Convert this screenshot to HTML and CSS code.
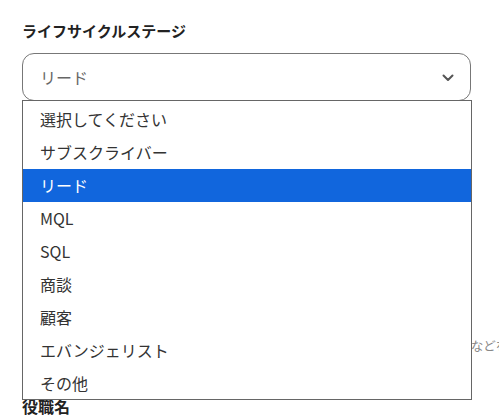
FILE: index.html
```html
<!DOCTYPE html>
<html lang="ja">
<head>
<meta charset="utf-8">
<link rel="stylesheet" href="styles.css">
</head>
<body>
<div class="form">
  <div class="field">
    <div class="label">ライフサイクルステージ</div>
    <div class="select-wrap">
      <div class="select">
        <span class="value">リード</span>
        <svg class="chev" width="12" height="8" viewBox="0 0 12 8"><path d="M1.5 1.5 L6 6 L10.5 1.5" fill="none" stroke="#555" stroke-width="2" stroke-linecap="round" stroke-linejoin="round"/></svg>
      </div>
      <ul class="menu">
        <li class="opt">選択してください</li>
        <li class="opt">サブスクライバー</li>
        <li class="opt selected">リード</li>
        <li class="opt">MQL</li>
        <li class="opt">SQL</li>
        <li class="opt">商談</li>
        <li class="opt">顧客</li>
        <li class="opt">エバンジェリスト</li>
        <li class="opt">その他</li>
      </ul>
    </div>
  </div>
  <div class="field under">
    <div class="input"></div>
    <div class="hint">マーケティング部長、営業課長、カスタマーサクセス担当者、開発部門の責任者などを入力</div>
  </div>
  <div class="label next">役職名</div>
</div>
</body>
</html>
```

FILE: styles.css
```css
html, body {
  margin: 0;
  padding: 0;
  background: #fff;
  overflow: hidden;
}
body {
  width: 499px;
  height: 417px;
  font-family: "Noto Sans CJK JP", "Noto Sans", sans-serif;
  color: #333;
}
.form {
  padding: 20px 28px 0 22px;
}
.label {
  font-size: 15px;
  font-weight: 700;
  color: #222;
  line-height: 22px;
}
.select-wrap {
  position: relative;
  margin-top: 11px;
}
.select {
  box-sizing: border-box;
  height: 48px;
  border: 1px solid #777;
  border-radius: 12px;
  display: flex;
  align-items: center;
  justify-content: space-between;
  padding: 0 16px 0 17px;
  background: #fff;
}
.value {
  font-size: 16px;
  color: #666;
}
.chev {
  display: block;
  margin-top: 1px;
}
.menu {
  position: absolute;
  z-index: 5;
  left: 0;
  right: -1px;
  top: 47px;
  margin: 0;
  padding: 2px 0 0;
  list-style: none;
  background: #fff;
  border: 1px solid #666;
  box-sizing: border-box;
  height: 300px;
}
.opt {
  height: 33px;
  line-height: 33px;
  padding-left: 17px;
  font-size: 16px;
  color: #333;
}
.opt.selected {
  background: #1166dd;
  color: #fff;
}
.under {
  margin-top: 195px;
}
.input {
  height: 34px;
  box-sizing: border-box;
  border: 1px solid #444;
  border-radius: 6px;
}
.hint {
  margin-top: 7px;
  font-size: 12.5px;
  color: #888;
  white-space: nowrap;
  line-height: 18px;
}
.next {
  margin-top: 40px;
  font-size: 16px;
}
```
